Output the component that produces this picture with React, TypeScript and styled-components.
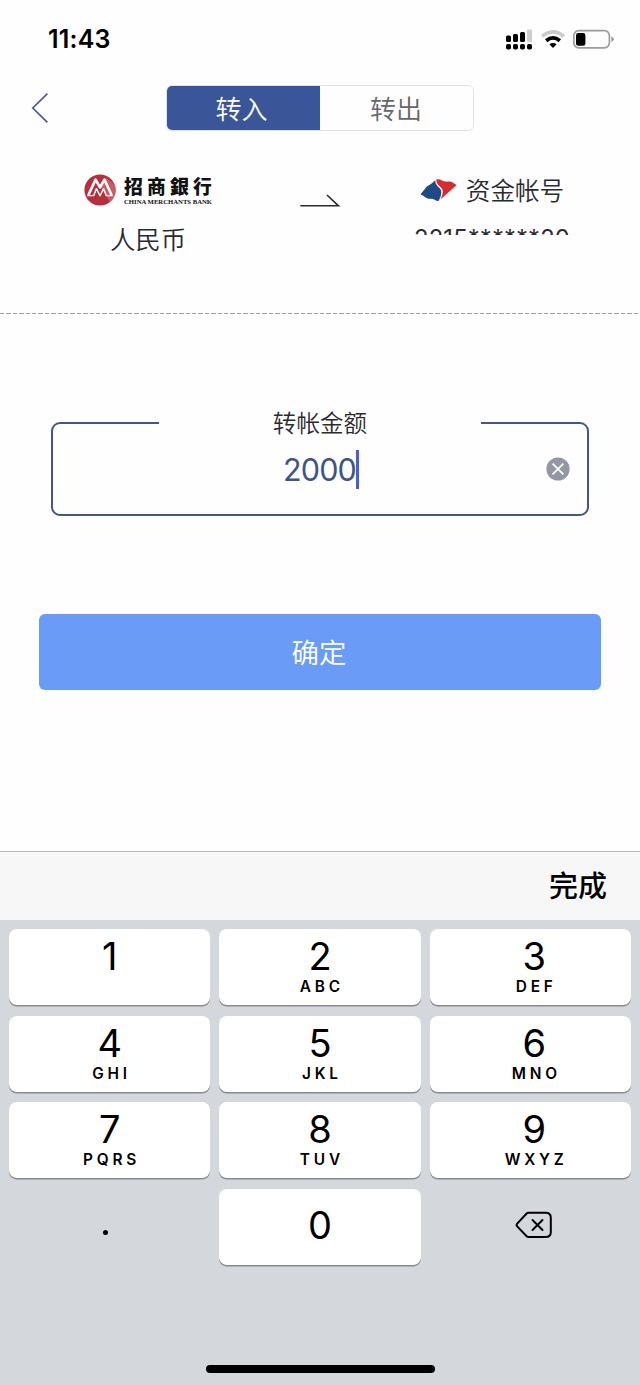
import React from "react";
import styled, { createGlobalStyle } from "styled-components";

const Global = createGlobalStyle`
  * { box-sizing: border-box; }
  body { margin: 0; background: #fefefe; font-family: Inter, "Noto Sans CJK SC", sans-serif; color: #2b2b2f; }
  button { font: inherit; border: 0; padding: 0; margin: 0; background: none; color: inherit; }
  svg { display: block; flex: none; }
`;

const Screen = styled.div`
  width: 640px;
  height: 1385px;
  display: flex;
  flex-direction: column;
  overflow: hidden;
`;

const StatusBar = styled.header`
  height: 77px;
  padding: 0 26px 0 48px;
  display: flex;
  justify-content: space-between;
  align-items: center;
`;

const Clock = styled.span`
  font-size: 25px;
  font-weight: 600;
  color: #000;
  letter-spacing: 0.2px;
`;

const NavBar = styled.nav`
  height: 62px;
  padding: 8px 0 8px 30px;
  display: flex;
  align-items: center;
`;

const BackButton = styled.button`
  width: 136px;
`;

const Segments = styled.div`
  width: 308px;
  height: 46px;
  display: grid;
  grid-template-columns: 1fr 1fr;
  border: 1.5px solid #dfe2ea;
  border-radius: 6px;
  overflow: hidden;
`;

const Segment = styled.button<{ $active?: boolean }>`
  font-size: 26px;
  line-height: 40px;
  font-weight: 350;
  padding: 4px ${(p) => (p.$active ? "4px" : "1px")} 0 0;
  color: ${(p) => (p.$active ? "#fff" : "#66676b")};
  background: ${(p) => (p.$active ? "#3a5699" : "#fefefe")};
`;

const Transfer = styled.section`
  height: 175px;
  display: grid;
  grid-template-columns: 296px 48px 296px;
  align-items: start;
  background: repeating-linear-gradient(90deg, #a2a2a2 0 4.4px, transparent 4.4px 6.4px) bottom / 100% 1.5px no-repeat;
`;

const Account = styled.div`
  display: flex;
  flex-direction: column;
  align-items: center;
  padding-top: 32px;
`;

const AccountHead = styled.div`
  height: 38px;
  display: flex;
  align-items: center;
  gap: 8px;
`;

const BankName = styled.div`
  width: 88px;
  display: flex;
  flex-direction: column;
  color: #111;
`;

const BankTitle = styled.span`
  font-family: "Noto Sans CJK SC", sans-serif;
  font-size: 18.8px;
  font-weight: 900;
  line-height: 24px;
  letter-spacing: 4.2px;
  white-space: nowrap;
`;

const BankLatin = styled.span`
  font: bold 6.7px/8px "Liberation Serif", serif;
  white-space: nowrap;
`;

const Label = styled.span`
  font-size: 24.6px;
  line-height: 36px;
  font-weight: 350;
  white-space: nowrap;
`;

const FundLabel = styled(Label)`
  padding-top: 2px;
`;

const Currency = styled(Label)`
  font-size: 25.4px;
  margin-top: 13px;
`;

const MaskedNumber = styled.span`
  height: 14px;
  margin-top: 12px;
  overflow: hidden;
  font-size: 23.8px;
  line-height: 36px;
  letter-spacing: 0.15px;
`;

const ArrowCell = styled.div`
  padding: 55px 0 0 3px;
`;

const AmountField = styled.fieldset`
  width: 538px;
  height: 94px;
  margin: 108px 0 0 51px;
  border: 2px solid #465588;
  border-radius: 9px;
  padding: 0 17px;
  display: flex;
  flex-direction: column;
  align-items: center;
`;

const AmountLabel = styled.div`
  width: 322px;
  height: 36px;
  margin-top: -19px;
  background: #fefefe;
  text-align: center;
  font-size: 23.6px;
  line-height: 38px;
  font-weight: 350;
`;

const AmountRow = styled.div`
  width: 100%;
  height: 56px;
  display: grid;
  grid-template-columns: 1fr auto 1fr;
  align-items: center;
`;

const AmountValue = styled.span`
  grid-column: 2;
  display: flex;
  align-items: center;
  padding: 1px 0 0 2px;
  font-size: 30.5px;
  line-height: 40px;
  letter-spacing: -0.8px;
  color: #3e5488;
`;

const Caret = styled.i`
  width: 3px;
  height: 39px;
  background: #4a5fcf;
`;

const ClearButton = styled.button`
  justify-self: end;
`;

const ConfirmButton = styled.button`
  width: 562px;
  height: 76px;
  margin: 98px 0 0 39px;
  padding: 0 2px 2px 0;
  flex: none;
  border-radius: 6px;
  background: #699bf7;
  color: #fff;
  font-size: 27.4px;
  font-weight: 350;
`;

const Keyboard = styled.section`
  margin-top: auto;
  height: 534px;
  background: #d4d7dc;
  display: flex;
  flex-direction: column;
`;

const Accessory = styled.div`
  height: 69px;
  border-top: 1px solid #bcbcbe;
  background: #f7f7f7;
  padding: 0 33px 4px 0;
  display: flex;
  align-items: center;
  justify-content: flex-end;
`;

const Done = styled.button`
  color: #000;
  font-size: 29px;
  font-weight: 500;
`;

const Keys = styled.div`
  padding: 9px 9px 0;
  display: grid;
  grid-template-columns: repeat(3, 1fr);
  grid-auto-rows: 76px;
  gap: 10.7px 9px;
`;

const Key = styled.button<{ $plain?: boolean; $center?: boolean }>`
  display: flex;
  flex-direction: column;
  align-items: center;
  justify-content: ${(p) => (p.$center ? "center" : "flex-start")};
  padding-top: ${(p) => (p.$center ? "0" : "6px")};
  padding-bottom: ${(p) => (p.$center ? "4px" : "0")};
  border-radius: 8px;
  color: #000;
  background: ${(p) => (p.$plain ? "transparent" : "#fff")};
  box-shadow: ${(p) => (p.$plain ? "none" : "0 1.5px 0 #898a8d")};

  &:nth-child(3n) {
    padding-left: 8px;
  }
`;

const Digit = styled.span`
  font-size: 38px;
  line-height: 42px;
  font-weight: 380;
`;

const Letters = styled.span`
  font-size: 15.4px;
  line-height: 20px;
  font-weight: 600;
  letter-spacing: 3.8px;
  margin-right: -3.8px;
`;

const Dot = styled.i`
  width: 5px;
  height: 5px;
  border-radius: 50%;
  background: #000;
  margin: 14px 9px 0 0;
`;

const HomeBar = styled.div`
  width: 229px;
  height: 8px;
  border-radius: 4px;
  background: #000;
  margin: auto auto 12px;
`;

const StatusIcons = () => (
  <svg width="108" height="24" viewBox="506 26 108 24">
    <g fill="#000">
      <rect x="506" y="34.6" width="5" height="6.4" rx="1.5" />
      <rect x="513" y="33" width="5" height="8" rx="1.5" />
      <rect x="520" y="31" width="5" height="10" rx="1.5" />
      <rect x="527" y="28.6" width="5" height="12.4" rx="1" fill="#cfcfcf" />
      <rect x="506" y="43" width="5" height="5.6" rx="1.8" />
      <rect x="513" y="43" width="5" height="5.6" rx="1.8" />
      <rect x="520" y="43" width="5" height="5.6" rx="1.8" />
      <rect x="527" y="43" width="5" height="5.6" rx="1.8" />
    </g>
    <path d="M542.2 35.4Q553 26.4 563.8 35.4" fill="none" stroke="#cbcbcb" strokeWidth="3.6" />
    <path d="M546.2 39.8Q553 34 559.8 39.8" fill="none" stroke="#000" strokeWidth="3.8" />
    <path d="M549.4 43.2Q553 40.6 556.6 43.2L553 47Z" fill="#000" />
    <rect x="573.8" y="29.6" width="35.6" height="17.2" rx="5" fill="none" stroke="#9c9c9c" strokeWidth="1.7" />
    <rect x="576" y="32" width="9.4" height="12.8" rx="2.4" fill="#000" />
    <path d="M611.4 35.5Q613.8 36.4 613.8 38.2T611.4 41Z" fill="#999" />
  </svg>
);

const MerchantsMark = () => (
  <svg width="32" height="32" viewBox="0 0 32 32">
    <circle cx="16" cy="16" r="15.6" fill="#b5303d" />
    <path d="M17 14 26 28A15.6 15.6 0 0 0 30.6 10.4L22 4Z" fill="#cc5a66" />
    <path d="M4.4 21 11.6 5.6 16 13.4 20.4 5.6 27.6 21" fill="none" stroke="#fff" strokeWidth="2.6" strokeLinejoin="round" />
    <path d="M3.2 21.6H9.8L12.4 14.6 16 21.8 19.6 14.6 22.2 21.6H28.8" fill="none" stroke="#fff" strokeWidth="1.4" strokeLinejoin="round" />
  </svg>
);

const BrokerMark = () => (
  <svg width="38" height="24" viewBox="0 0 38 24">
    <path d="M.4 16.4L6.8 8.4Q11.5 6 15.4 2.2C15 6.3 17.8 8 20 10.5C22.5 13.7 21.2 18 18.6 23C15 22.8 14 20.4 10 20.7C6 21 5 18 .4 16.4Z" fill="#204a85" />
    <path d="M16.4 1.6C20 0 22 3.4 26 3.6C29 3.8 31 2.6 36.4 7.2L20.4 21.4C23.6 15.4 23.4 12.2 21 9.6C18.7 7.2 16.2 6 16.4 1.6Z" fill="#d52b31" />
  </svg>
);

const rows: [string, string][] = [
  ["1", ""], ["2", "ABC"], ["3", "DEF"],
  ["4", "GHI"], ["5", "JKL"], ["6", "MNO"],
  ["7", "PQRS"], ["8", "TUV"], ["9", "WXYZ"],
];

export default function App() {
  return (
    <Screen>
      <Global />
      <StatusBar>
        <Clock>11:43</Clock>
        <StatusIcons />
      </StatusBar>
      <NavBar>
        <BackButton aria-label="返回">
          <svg width="20" height="32" viewBox="0 0 20 32">
            <path d="M17.4 1.6 2.8 16 17.4 30.4" fill="none" stroke="#4b5c8c" strokeWidth="1.7" />
          </svg>
        </BackButton>
        <Segments>
          <Segment $active>转入</Segment>
          <Segment>转出</Segment>
        </Segments>
      </NavBar>
      <Transfer>
        <Account>
          <AccountHead>
            <MerchantsMark />
            <BankName>
              <BankTitle>招商銀行</BankTitle>
              <BankLatin>CHINA MERCHANTS BANK</BankLatin>
            </BankName>
          </AccountHead>
          <Currency>人民币</Currency>
        </Account>
        <ArrowCell>
          <svg width="42" height="14" viewBox="0 0 42 14">
            <path d="M1.3 11.8H39.4L28 1" fill="none" stroke="#2c2c30" strokeWidth="1.6" />
          </svg>
        </ArrowCell>
        <Account>
          <AccountHead>
            <BrokerMark />
            <FundLabel>资金帐号</FundLabel>
          </AccountHead>
          <MaskedNumber>2215******20</MaskedNumber>
        </Account>
      </Transfer>
      <AmountField>
        <AmountLabel>转帐金额</AmountLabel>
        <AmountRow>
          <AmountValue>
            2000
            <Caret />
          </AmountValue>
          <ClearButton aria-label="清除">
            <svg width="24" height="24" viewBox="0 0 24 24">
              <circle cx="12" cy="12" r="11.6" fill="#9297a3" />
              <path d="M6.6 6.6 17.4 17.4M17.4 6.6 6.6 17.4" stroke="#fff" strokeWidth="1.7" />
            </svg>
          </ClearButton>
        </AmountRow>
      </AmountField>
      <ConfirmButton>确定</ConfirmButton>
      <Keyboard>
        <Accessory>
          <Done>完成</Done>
        </Accessory>
        <Keys>
          {rows.map(([digit, letters]) => (
            <Key key={digit}>
              <Digit>{digit}</Digit>
              {letters && <Letters>{letters}</Letters>}
            </Key>
          ))}
          <Key $plain $center aria-label="小数点">
            <Dot />
          </Key>
          <Key $center>
            <Digit>0</Digit>
          </Key>
          <Key $plain $center aria-label="删除">
            <svg width="38" height="28" viewBox="0 0 38 28">
              <path d="M13.6 1.8H30.5Q35.8 1.8 35.8 6.6V21.2Q35.8 26 30.5 26H13.6Q12.4 26 11.4 25L2.2 15.4Q1 14 2.2 12.6L11.4 2.8Q12.4 1.8 13.6 1.8Z" fill="none" stroke="#000" strokeWidth="2" />
              <path d="M17.5 9 27.5 19M27.5 9 17.5 19" stroke="#000" strokeWidth="2" strokeLinecap="round" />
            </svg>
          </Key>
        </Keys>
        <HomeBar />
      </Keyboard>
    </Screen>
  );
}
